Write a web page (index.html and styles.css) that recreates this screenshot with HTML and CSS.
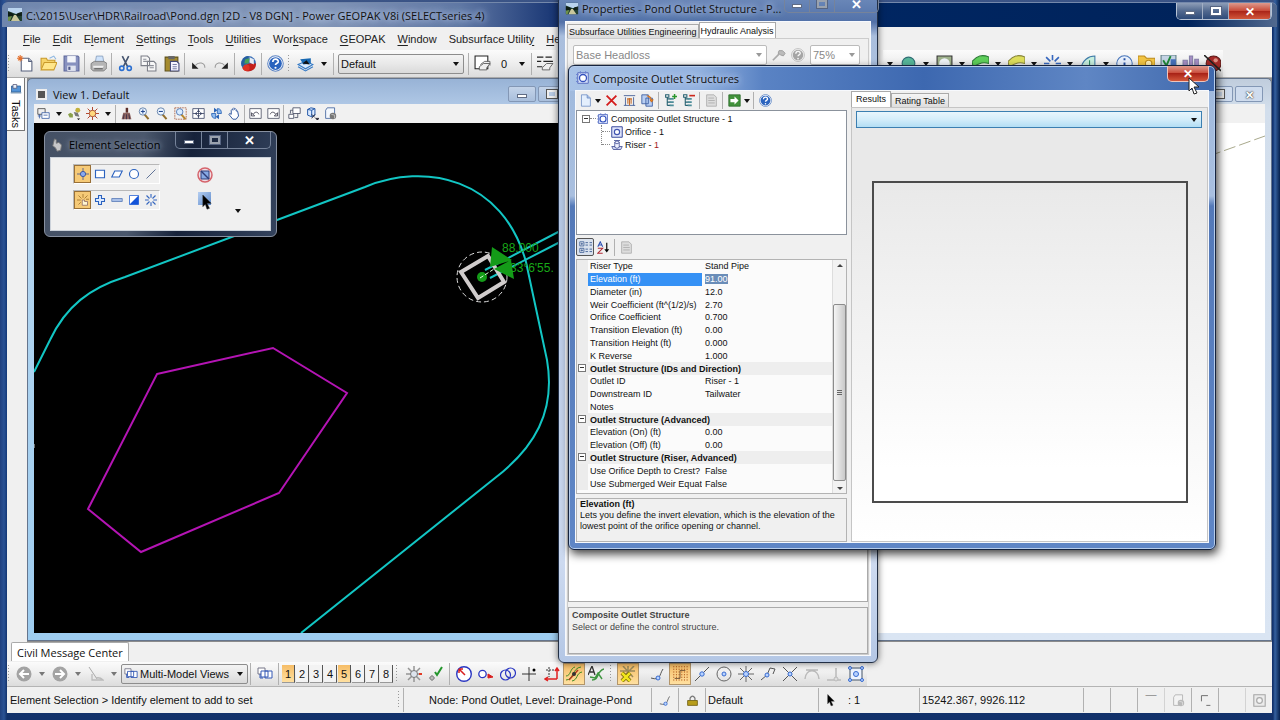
FILE: index.html
```html
<!DOCTYPE html>
<html lang="en">
<head>
<meta charset="utf-8">
<title>Power GEOPAK V8i</title>
<link rel="stylesheet" href="styles.css">
</head>
<body>
<svg class="defs" aria-hidden="true">
  <symbol id="photo" viewBox="0 0 16 16"><path d="M1 1h14v13H1z" fill="#1c3b2c"/><path d="M1 1h14v4L9 7 1 4z" fill="#b9d3ee"/><path d="M1 5l4 1 3 3 3-3 4-1v4H1z" fill="#0d1c14"/><path d="M7 8h2l4 6H4z" fill="#c9c79c"/><path d="M1 10l4-1-2 5H1z" fill="#6d8f4a"/></symbol>
  <symbol id="new" viewBox="0 0 16 16"><path d="M4 3h7l3 3v9H4z" fill="#fff" stroke="#56607c"/><path d="M11 3v3h3" fill="#ccd6e8" stroke="#56607c"/><path d="M3 0v6M0 3h6M1 1l4 4M5 1L1 5" stroke="#e4702c"/></symbol>
  <symbol id="open" viewBox="0 0 16 16"><path d="M1 13V3h5l1 2h7v3" fill="#f6d46a" stroke="#c99a2b"/><path d="M1 14l3-7h12l-3 7z" fill="#ffe68a" stroke="#c99a2b"/><path d="M9 3l4-2 2 3" fill="none" stroke="#8ab5e0"/></symbol>
  <symbol id="save" viewBox="0 0 16 16"><path d="M1 1h13l1 1v13H1z" fill="#8791bf" stroke="#5c6699"/><path d="M4 1h8v6H4z" fill="#f4f6fb"/><path d="M4 10h8v5H4z" fill="#dfe3ef"/><path d="M5 11h2v3H5z" fill="#4d5789"/></symbol>
  <symbol id="print" viewBox="0 0 16 16"><path d="M5 7L6 1h6l1 6z" fill="#cfe3fb" stroke="#7d94b3" stroke-width=".7"/><path d="M1 8l3-2h9l3 2v4l-3 3H3l-2-2z" fill="#b5b5b5" stroke="#777" stroke-width=".8"/><path d="M3 10h10l-1 2H3z" fill="#eee"/><path d="M4 13h8" stroke="#555"/></symbol>
  <symbol id="cut" viewBox="0 0 16 16"><path d="M5 1l5 10M11 1L6 11" stroke="#44536e" stroke-width="1.5"/><circle cx="4.500" cy="12.500" r="2" fill="none" stroke="#2b6fd0" stroke-width="1.500"/><circle cx="11.500" cy="12.500" r="2" fill="none" stroke="#2b6fd0" stroke-width="1.500"/></symbol>
  <symbol id="copy" viewBox="0 0 16 16"><path d="M1 1h6l2 2v7H1zM7 6h6l2 2v7H7z" fill="#f7f7f7" stroke="#7c7f88"/><path d="M3 4h3M3 6h4M9 10h4M9 12h4" stroke="#8c8f98"/></symbol>
  <symbol id="paste" viewBox="0 0 16 16"><path d="M2 2h12v13H2z" fill="#a58b2e" stroke="#5e5019"/><path d="M5 1h6v3H5z" fill="#666"/><path d="M7 6h6l2 2v7H7z" fill="#f5f5ff" stroke="#444a7a"/><path d="M9 9h4M9 11h4M9 13h4" stroke="#7a80a8"/></symbol>
  <symbol id="undo" viewBox="0 0 16 16"><path d="M2 7v6h6z" fill="#222"/><path d="M5 10c3-4 9-3 9 2" fill="none" stroke="#999"/></symbol>
  <symbol id="redo" viewBox="0 0 16 16"><path d="M14 7v6H8z" fill="#222"/><path d="M11 10C8 6 2 7 2 12" fill="none" stroke="#999"/></symbol>
  <symbol id="ball" viewBox="0 0 16 16"><circle cx="8" cy="8" r="7" fill="#3c70b8"/><path d="M8 8h7a7 7 0 0 1-13 4z" fill="#c5201c"/><path d="M8 1a7 7 0 0 0-6 10l5-3z" fill="#275f9f"/><path d="M9 2l4 2v5l-4-2z" fill="#e7edf5"/><path d="M5 4l4-1-1 5H4z" fill="#49a157"/><circle cx="6" cy="12" r="3" fill="#df3323"/></symbol>
  <symbol id="help" viewBox="0 0 16 16"><circle cx="8" cy="8" r="7.300" fill="#fff" stroke="#5d84c3"/><circle cx="8" cy="8" r="6" fill="#2a63be"/><path d="M5.500 6.500c0-4 5.500-3 5 0-.4 1.500-2.500 1.300-2.500 3" fill="none" stroke="#fff" stroke-width="1.600"/><circle cx="8" cy="12" r="1" fill="#fff"/></symbol>
  <symbol id="model" viewBox="0 0 16 16"><path d="M1 9l7-3 7 3-7 4z" fill="#d8eafc" stroke="#3479c5"/><path d="M1 11l7 4 7-4" fill="none" stroke="#3479c5"/><path d="M3 4l10-1v5l-7 1z" fill="#1768b2"/><path d="M5 8l4-3 3 4z" fill="#111"/></symbol>
  <symbol id="layer" viewBox="0 0 16 16"><path d="M1 1h12v12H1z" fill="#fff" stroke="#222"/><path d="M5 11l4-3h6l-3 4v2H5zM6 9l4-3h5v4" fill="#eee" stroke="#555" stroke-width=".8"/></symbol>
  <symbol id="linestyle" viewBox="0 0 16 16"><path d="M0 2h6M8 2h6M0 6h4M6 6h9M0 11h5" stroke="#222"/><path d="M5 12l4-4h6l-3 4v2H5z" fill="#eee" stroke="#555" stroke-width=".8"/></symbol>
  <symbol id="views" viewBox="0 0 16 16"><path d="M1 2h9v7H1z" fill="#eee" stroke="#444"/><path d="M6 7h9v7H6z" fill="#fff" stroke="#3a5fa5"/><path d="M1 11h4M3 9v5M8 10h5" stroke="#3a5fa5"/></symbol>
  <symbol id="attributes" viewBox="0 0 16 16"><path d="M0 9l3-2 3 2v4H2z" fill="#8aa04a"/><circle cx="12" cy="4" r="3" fill="#c2b13c"/><path d="M7 6l5 1 2 5-5-1z" fill="#777"/><path d="M11 14h4l-2 2z"/></symbol>
  <symbol id="sun" viewBox="0 0 16 16"><path d="M8 0v16M0 8h16M2 2l12 12M14 2L2 14" stroke="#b2452d" stroke-width="1.2"/><circle cx="8" cy="8" r="4" fill="#ffd97d" stroke="#9c3a28"/></symbol>
  <symbol id="brush" viewBox="0 0 16 16"><path d="M7 1h3v6H7z" fill="#5c2f2a"/><path d="M4 7h8l2 8H2z" fill="#8d6460"/><path d="M5 9l-1 6M8 9v6M11 9l1 6" stroke="#372c48"/></symbol>
  <symbol id="zoomin" viewBox="0 0 16 16"><path d="M8 9l5 6" stroke="#93702e" stroke-width="2.500"/><circle cx="6" cy="5.500" r="4.500" fill="#eaf4ff" stroke="#51719d"/><path d="M3.500 5.500h5M6 3v5" stroke="#264b93" stroke-width="1.300"/></symbol>
  <symbol id="zoomout" viewBox="0 0 16 16"><path d="M8 9l5 6" stroke="#93702e" stroke-width="2.500"/><circle cx="6" cy="5.500" r="4.500" fill="#eaf4ff" stroke="#51719d"/><path d="M3.500 5.500h5" stroke="#264b93" stroke-width="1.300"/></symbol>
  <symbol id="zoomarea" viewBox="0 0 16 16"><path d="M1 1h14v14H1z" fill="none" stroke="#a65a3c" stroke-dasharray="2 1"/><path d="M9 9l5 6" stroke="#b9892e" stroke-width="2.500"/><circle cx="7" cy="6" r="4" fill="#d9ecff" stroke="#3d69ac"/></symbol>
  <symbol id="fit" viewBox="0 0 16 16"><path d="M1 2h14v12H1zM8 2v12M1 8h14" fill="#fff" stroke="#3c4666"/><path d="M3 8l3-2v4zM13 8l-3-2v4zM8 3L6 6h4zM8 13l-2-3h4z" fill="#3c4666"/></symbol>
  <symbol id="rotate" viewBox="0 0 16 16"><path d="M2 8h5v6C3 14 2 12 2 8zM9 2c4 0 5 2 5 6H9z" fill="#8fbcf0" stroke="#245fb3"/><path d="M5 1l4 3-4 3zM11 9l-4 3 4 3z" fill="#245fb3"/></symbol>
  <symbol id="hand" viewBox="0 0 16 16"><path d="M4 9V4q1-2 2 0V2q1-2 2 0v1q1-2 2 0v2q2-1 2 1l1 5-3 4H6L1 9q1-2 3 0z" fill="#fff" stroke="#32599e" stroke-width="1.200"/></symbol>
  <symbol id="prev" viewBox="0 0 16 16"><path d="M1 2h14v12H1z" fill="#fff" stroke="#4b5062"/><path d="M3 7v4h4zM5 9c3-4 6-3 7 0" fill="none" stroke="#334"/></symbol>
  <symbol id="next" viewBox="0 0 16 16"><path d="M1 2h14v12H1z" fill="#fff" stroke="#4b5062"/><path d="M13 7v4H9zM11 9C8 5 5 6 4 9" fill="none" stroke="#334"/></symbol>
  <symbol id="viewcopy" viewBox="0 0 16 16"><path d="M6 1h9v7H6zM1 9h6v5H1z" fill="#fff" stroke="#444a60"/><path d="M3 4h3M3 4v4M12 8v5H8" fill="none" stroke="#444a60"/></symbol>
  <symbol id="cube" viewBox="0 0 16 16"><path d="M2 3l4-2 5 1v8l-4 2-5-2zM2 3l5 1v8M7 4l4-2" fill="#dcebff" stroke="#2457a7" stroke-width="1.200"/><path d="M7 9l4 4M11 9l-4 5M12 14h4l-2 2z" stroke="#223"/></symbol>
  <symbol id="clip" viewBox="0 0 16 16"><path d="M9 14H2V4l2-3h9v7" fill="#f4f8fd" stroke="#3c5f9b"/><circle cx="11" cy="11" r="4" fill="#777"/><path d="M9 9l4 1v4" stroke="#ccc" fill="none"/></symbol>
  <symbol id="tasks" viewBox="0 0 16 16"><path d="M2 4h12v8H2z" fill="#5394d8" stroke="#28588d"/><path d="M4 2h5v5H4z" fill="#e8f1fb" stroke="#557"/><path d="M1 12h14v2H1z" fill="#7f9cba"/></symbol>
  <symbol id="target" viewBox="0 0 16 16"><path d="M8 0v16M0 8h16" stroke="#364a8e"/><circle cx="8" cy="8" r="3.500" fill="#88a9ee" stroke="#24439b"/></symbol>
  <symbol id="rect" viewBox="0 0 16 16"><path d="M2 3h12v10H2z" fill="#fff" stroke="#2b62bf" stroke-width="1.500"/></symbol>
  <symbol id="skew" viewBox="0 0 16 16"><path d="M5 4h10l-4 8H1z" fill="#fff" stroke="#2b62bf" stroke-width="1.500"/></symbol>
  <symbol id="circle" viewBox="0 0 16 16"><circle cx="8" cy="8" r="6" fill="#fff" stroke="#2b62bf" stroke-width="1.500"/></symbol>
  <symbol id="line" viewBox="0 0 16 16"><path d="M2 14L14 2" stroke="#5c6f94" stroke-width="1.300"/></symbol>
  <symbol id="pick" viewBox="0 0 16 16"><path d="M8 0v5M0 8h5M2 2l4 4M14 2l-4 4M2 14l3-3M12 7h4" stroke="#956a24"/><path d="M7 15V8h3v2h4v5z" fill="#fff6d2" stroke="#866"/></symbol>
  <symbol id="plus" viewBox="0 0 16 16"><path d="M6 2h4v4h4v4h-4v4H6v-4H2V6h4z" fill="#dceaff" stroke="#2b62bf" stroke-width="1.400"/></symbol>
  <symbol id="minus" viewBox="0 0 16 16"><path d="M1 6h14v4H1z" fill="#a9c0e8" stroke="#5375b4"/></symbol>
  <symbol id="invert" viewBox="0 0 16 16"><path d="M2 2h12v12H2z" fill="#fff" stroke="#1c5bd2"/><path d="M14 2v12H2z" fill="#1454d9"/></symbol>
  <symbol id="burst" viewBox="0 0 16 16"><path d="M8 0v5M8 11v5M0 8h5M11 8h5M2 2l4 4M10 10l4 4M14 2l-4 4M6 10l-4 4" stroke="#3667bf" stroke-width="1.500"/></symbol>
  <symbol id="deny" viewBox="0 0 16 16"><circle cx="8" cy="8" r="7" fill="#f1dfe6" stroke="#d5646c" stroke-width="1.500"/><path d="M4 4h8v8H4z" fill="#86a9e4" stroke="#303d78"/><path d="M4 4l8 8" stroke="#303d78" stroke-width="1.500"/></symbol>
  <symbol id="cursor" viewBox="0 0 12 18"><path d="M1 0v14l3-3 2 6 3-1-3-6h5z" fill="#000" stroke="#333" stroke-width=".6"/></symbol>
  <symbol id="wrench" viewBox="0 0 16 16"><path d="M4 1l2 1v4l3-1 3 3-1 6-4 1-2-4-3-2z" fill="#c5c6c9" stroke="#777"/></symbol>
  <symbol id="tool" viewBox="0 0 16 16"><path d="M1 14l7-7" stroke="#aaa" stroke-width="2"/><path d="M8 3h4l3 3-2 3-3-1-3-2z" fill="#bbb" stroke="#999"/></symbol>
  <symbol id="composite" viewBox="0 0 16 16"><path d="M2 2h12v12H2z" fill="#d8e2fc" stroke="#4a60b8"/><circle cx="8" cy="8" r="4" fill="#fff" stroke="#3451bd" stroke-width="1.500"/><path d="M0 4h3M0 8h2M0 12h3M5 0v3M11 0v3" stroke="#6a80d0"/></symbol>
  <symbol id="orifice" viewBox="0 0 16 16"><path d="M1 1h14v14H1z" fill="#dfe4fb" stroke="#38479b" stroke-width="1.300"/><circle cx="8" cy="8" r="3.500" fill="#fff" stroke="#4053b0" stroke-width="1.500"/></symbol>
  <symbol id="riser" viewBox="0 0 16 16"><path d="M1 10h14l-2 4H3z" fill="#d4daf5" stroke="#34408b"/><path d="M5 11V4q3-3 6 0v7q-3 3-6 0z" fill="#f1f3ff" stroke="#34408b"/><path d="M5 5q3 3 6 0M4 2h8" fill="none" stroke="#34408b"/></symbol>
  <symbol id="doc" viewBox="0 0 16 16"><path d="M3 1h7l4 4v10H3z" fill="#e4effd" stroke="#6f8fc5"/><path d="M10 1v4h4" fill="#a3bce3" stroke="#6f8fc5"/></symbol>
  <symbol id="delete" viewBox="0 0 16 16"><path d="M2 2l12 12M14 2L2 14" stroke="#d41c1c" stroke-width="2.200"/></symbol>
  <symbol id="rename" viewBox="0 0 16 16"><path d="M1 2h14M3 4v10M13 4v10M1 14h14" stroke="#36538f"/><path d="M5 6h6M6 6v6M10 6v6M8 5v9" stroke="#c66d2b" stroke-width="1.300"/></symbol>
  <symbol id="report" viewBox="0 0 16 16"><path d="M1 1h8v11H1zM6 5h8v10H6z" fill="#b8cef2" stroke="#34569b"/><path d="M7 2l4 1 2 4M11 7h4l-2 3z" fill="#f28b24" stroke="#c86916"/></symbol>
  <symbol id="treeadd" viewBox="0 0 16 16"><path d="M2 1h4v3H2zM4 4v10M4 6h4M4 10h4M4 14h4" fill="none" stroke="#246070" stroke-width="1.300"/><path d="M7 5h5v2H7zM7 9h5v2H7zM7 13h5v2H7z" fill="#4e8d99"/><path d="M13 0v6M10 3h6" stroke="#29962d" stroke-width="1.800"/></symbol>
  <symbol id="treedel" viewBox="0 0 16 16"><path d="M2 1h4v3H2zM4 4v10M4 6h4M4 10h4M4 14h4" fill="none" stroke="#246070" stroke-width="1.300"/><path d="M7 5h5v2H7zM7 9h5v2H7zM7 13h5v2H7z" fill="#4e8d99"/><path d="M9 2h7" stroke="#cd281d" stroke-width="2"/></symbol>
  <symbol id="page" viewBox="0 0 16 16"><path d="M2 1h9l3 3v11H2z" fill="#ddd" stroke="#aaa"/><path d="M4 5h7M4 8h8M4 11h8" stroke="#aaa"/></symbol>
  <symbol id="go" viewBox="0 0 16 16"><path d="M1 1h14v14H1z" fill="#42923b" stroke="#2b6b2b"/><path d="M3 6h5V3l5 5-5 5v-3H3z" fill="#fff"/></symbol>
  <symbol id="category" viewBox="0 0 16 16"><path d="M1 1h5v5H1zM1 9h5v5H1z" fill="#fff" stroke="#30528c"/><path d="M2 3.500h3M3.500 2v3M2 11.500h3M3.500 10v3M8 2h3M13 2h3M8 5h3M13 5h3M8 10h3M13 10h3M8 13h3M13 13h3" stroke="#30528c"/></symbol>
  <symbol id="sort" viewBox="0 0 16 16"><path d="M1 7l3-6 3 6M2 5h4" fill="none" stroke="#2b50b5" stroke-width="1.300"/><path d="M1 9h6l-6 6h6" fill="none" stroke="#b02a35" stroke-width="1.300"/><path d="M12 2v9" stroke="#111" stroke-width="1.500"/><path d="M9 10h6l-3 4z"/></symbol>
  <symbol id="back" viewBox="0 0 16 16"><circle cx="8" cy="8" r="7.500" fill="#a3a3a3"/><path d="M13 8H4M8 4L4 8l4 4" fill="none" stroke="#fff" stroke-width="2"/></symbol>
  <symbol id="forward" viewBox="0 0 16 16"><circle cx="8" cy="8" r="7.500" fill="#a3a3a3"/><path d="M3 8h9M8 4l4 4-4 4" fill="none" stroke="#fff" stroke-width="2"/></symbol>
  <symbol id="flag" viewBox="0 0 16 16"><path d="M1 1l8 12" stroke="#aaa"/><path d="M4 8v6h11q-3-3-7-2" fill="none" stroke="#bbb" stroke-width="1.300"/></symbol>
  <symbol id="multi" viewBox="0 0 16 16"><path d="M1 2h7v6H1z" fill="#fff" stroke="#778"/><path d="M4 5h7v6H4zM8 5h7v7H8z" fill="#fff" stroke="#3559b5"/><path d="M3 8v4h3" fill="none" stroke="#3559b5"/></symbol>
  <symbol id="gear" viewBox="0 0 16 16"><path d="M8 0v16M0 8h16M2 2l12 12M14 2L2 14" stroke="#959595" stroke-width="1.500"/><circle cx="8" cy="8" r="3.500" fill="#dde4ed" stroke="#777"/><path d="M13 7h3v2h-3z" fill="#e23a25"/></symbol>
  <symbol id="check" viewBox="0 0 16 16"><path d="M1 12h6M4 9v6" stroke="#888"/><circle cx="4" cy="12" r="2" fill="#bbb" stroke="#888"/><path d="M7 6l2 3 5-8" fill="none" stroke="#24962d" stroke-width="2"/></symbol>
  <symbol id="c1" viewBox="0 0 16 16"><circle cx="8" cy="8" r="7.300" fill="#fff" stroke="#2a36c2" stroke-width="1.400"/><path d="M9 9L3 3M3 3v4M3 3h4" stroke="#d92020" stroke-width="1.500"/></symbol>
  <symbol id="c2" viewBox="0 0 16 16"><circle cx="4.500" cy="8" r="3.700" fill="#fff" stroke="#2a36c2" stroke-width="1.300"/><path d="M15 11l-5-3v4z" stroke="#d92020" fill="#d92020"/></symbol>
  <symbol id="c3" viewBox="0 0 16 16"><circle cx="5.500" cy="9" r="5" fill="none" stroke="#2a36c2" stroke-width="1.200"/><circle cx="10.500" cy="7" r="5" fill="none" stroke="#2a36c2" stroke-width="1.200"/></symbol>
  <symbol id="c4" viewBox="0 0 16 16"><path d="M7 1v14M0 8h14" stroke="#333"/><circle cx="12" cy="4" r="1.500"/></symbol>
  <symbol id="c5" viewBox="0 0 16 16"><path d="M2 4h9M5 1v10" stroke="#333" stroke-dasharray="2 1"/><path d="M13 13V3M2 13h11M11 5l2-3 2 3M4 11l-3 2 3 2" fill="none" stroke="#e02020" stroke-width="1.500"/></symbol>
  <symbol id="c6" viewBox="0 0 16 16"><path d="M0 14c8 0 6-12 15-13M0 10c5 0 4-8 9-9M6 15c6-1 4-8 10-9" fill="none" stroke="#3f8c24"/><path d="M3 14l9-10" stroke="#b33b20" stroke-width="1.500"/><circle cx="8" cy="8" r="2" fill="#333"/></symbol>
  <symbol id="c7" viewBox="0 0 16 16"><path d="M0 9L4 0l3 9M2 6h4" fill="none" stroke="#333" stroke-width="1.300"/><path d="M4 14c8 0 4-9 12-11M2 11l5 1 3-5 4 6" fill="none" stroke="#3f9640" stroke-width="1.400"/></symbol>
  <symbol id="s0" viewBox="0 0 16 16"><path d="M3 0l10 11M14 0L5 9M8 0v11M0 5h15" stroke="#9b8a5b" stroke-width="1.500"/><path d="M2 7l8 8M10 7l-8 8" stroke="#6a5f00" stroke-width="4"/><path d="M2 7l8 8M10 7l-8 8" stroke="#f1e51c" stroke-width="2.500"/></symbol>
  <symbol id="s1" viewBox="0 0 16 16"><path d="M1 12c10 3 8-3 12-9" fill="none" stroke="#555"/><circle cx="8" cy="12" r="2" fill="#b8d3ff" stroke="#386bd0"/></symbol>
  <symbol id="dots" viewBox="0 0 18 18"><path d="M2 0v18M5 0v18M8 0v18M11 0v18M14 0v18M17 0v18" stroke="#b25b1d" stroke-dasharray="1.500 1.500"/><path d="M3 14h6V5h6" fill="none" stroke="#6c5033"/></symbol>
  <symbol id="s3" viewBox="0 0 16 16"><path d="M1 15L15 1" stroke="#555"/><circle cx="8" cy="8" r="2.200" fill="#b8d3ff" stroke="#386bd0"/></symbol>
  <symbol id="s4" viewBox="0 0 16 16"><circle cx="8" cy="8" r="7" fill="none" stroke="#666"/><circle cx="8" cy="8" r="2" fill="#b8d3ff" stroke="#386bd0"/></symbol>
  <symbol id="s5" viewBox="0 0 16 16"><path d="M8 0v16M0 8h16M2 2l12 12M14 2L2 14" stroke="#666"/><circle cx="8" cy="8" r="2.500" fill="#b8d3ff" stroke="#386bd0"/></symbol>
  <symbol id="s6" viewBox="0 0 16 16"><path d="M1 14l6-5 3-7 5 1-2 5" fill="none" stroke="#555"/><circle cx="7" cy="9" r="2" fill="#b8d3ff" stroke="#386bd0"/></symbol>
  <symbol id="s7" viewBox="0 0 16 16"><path d="M1 1l14 14M15 1L1 15" stroke="#555"/><circle cx="8" cy="8" r="2" fill="#b8d3ff" stroke="#386bd0"/></symbol>
  <symbol id="s8" viewBox="0 0 16 16"><path d="M1 13c1-11 13-11 14 0M2 4h12" fill="none" stroke="#bbb" stroke-width="1.500"/></symbol>
  <symbol id="s9" viewBox="0 0 16 16"><path d="M1 14h14M10 2v12" stroke="#bbb" stroke-width="1.500"/><circle cx="10" cy="13" r="2" fill="#ddd" stroke="#bbb"/></symbol>
  <symbol id="s10" viewBox="0 0 16 16"><path d="M2 2h12v12H2z" fill="#eef4ff" stroke="#456"/><g fill="#b8d3ff" stroke="#386bd0"><circle cx="2" cy="2" r="1.500"/><circle cx="14" cy="2" r="1.500"/><circle cx="2" cy="14" r="1.500"/><circle cx="14" cy="14" r="1.500"/><circle cx="8" cy="8" r="2.500"/></g></symbol>
  <symbol id="lock" viewBox="0 0 16 16"><path d="M5 8V5q3-5 6 0v3" fill="none" stroke="#777" stroke-width="1.500"/><path d="M2 8h12v6H2z" fill="#b79d1b" stroke="#6e5e10"/></symbol>
  <symbol id="globe" viewBox="0 0 16 16"><circle cx="8" cy="8" r="6" fill="#58b79b" stroke="#2e6d74"/></symbol>
  <symbol id="aerial" viewBox="0 0 16 16"><path d="M1 1h14v14H1z" fill="#9fb28c" stroke="#333"/><circle cx="8" cy="8" r="5" fill="#eef3f7"/></symbol>
  <symbol id="sheetg" viewBox="0 0 16 16"><path d="M0 6c5-5 9-7 16-4v6c-6-2-9 0-15 3z" fill="#5fcf5b" stroke="#2d7a37"/></symbol>
  <symbol id="sheety" viewBox="0 0 16 16"><path d="M0 6c5-5 9-7 16-4v6c-6-2-9 0-15 3z" fill="#dede5c" stroke="#86843a"/></symbol>
  <symbol id="sail" viewBox="0 0 16 16"><path d="M1 13C2 5 8 1 14 1v12z" fill="#c8efdf" stroke="#3f7aa8"/><path d="M9 5v8" stroke="#2d8a63"/></symbol>
  <symbol id="info" viewBox="0 0 16 16"><circle cx="8" cy="8" r="7.300" fill="#e8f0fc" stroke="#4674b9"/><path d="M8 3v2M8 7v6" stroke="#2752a6" stroke-width="1.800"/></symbol>
  <symbol id="folders" viewBox="0 0 16 16"><path d="M0 1h6l2 2h8v12H0z" fill="#f2c544" stroke="#bd8a1b"/><circle cx="10" cy="8" r="3" fill="#fff1b8" stroke="#bd8a1b"/></symbol>
  <symbol id="chart" viewBox="0 0 16 16"><path d="M1 0h14v14H1z" fill="#c4d3e4" stroke="#5d7c82"/><path d="M3 5l3 5 4-9" fill="none" stroke="#208838" stroke-width="1.800"/><path d="M10 4h5v8h-5z" fill="#4772bc"/></symbol>
  <symbol id="bars" viewBox="0 0 16 16"><path d="M1 5h4v10H1zM7 1h3v14H7zM12 4h4v11h-4z" fill="#a58fc5" stroke="#8580a8"/></symbol>
  <symbol id="stop" viewBox="0 0 16 16"><circle cx="9" cy="8" r="7" fill="#a62a28" stroke="#5b1a17"/><path d="M0 0l16 15" stroke="#222" stroke-width="1.500"/><circle cx="11" cy="5" r="2" fill="#dd8f83"/></symbol>
</svg>

<div class="desktop">
  <div class="app">
    <header class="app-title">
      <svg class="i16"><use href="#photo"/></svg>
      <h1 class="glow">C:\2015\User\HDR\Railroad\Pond.dgn [2D - V8 DGN] - Power GEOPAK V8i (SELECTseries 4)</h1>
      <div class="caption"><button aria-label="Minimize"><i class="min"></i></button><button aria-label="Restore"><i class="max"></i></button><button class="close" aria-label="Close">✕</button></div>
    </header>
    <nav class="menu">
      <a href="#"><u>F</u>ile</a><a href="#"><u>E</u>dit</a><a href="#">E<u>l</u>ement</a><a href="#"><u>S</u>ettings</a><a href="#"><u>T</u>ools</a><a href="#"><u>U</u>tilities</a><a href="#">Wor<u>k</u>space</a><a href="#"><u>G</u>EOPAK</a><a href="#"><u>W</u>indow</a><a href="#">Subsurface Utilit<u>y</u></a><a href="#"><u>H</u>elp</a>
    </nav>
    <div class="toolrow">
      <div class="toolbar main-tools">
        <i class="grip"></i>
        <button aria-label="New"><svg><use href="#new"/></svg></button><button aria-label="Open"><svg><use href="#open"/></svg></button><button aria-label="Save"><svg><use href="#save"/></svg></button><i class="sep"></i>
        <button aria-label="Print"><svg><use href="#print"/></svg></button><i class="sep"></i>
        <button aria-label="Cut"><svg><use href="#cut"/></svg></button><button aria-label="Copy"><svg><use href="#copy"/></svg></button><button aria-label="Paste"><svg><use href="#paste"/></svg></button><i class="sep"></i>
        <button aria-label="Undo"><svg><use href="#undo"/></svg></button><button aria-label="Redo"><svg><use href="#redo"/></svg></button><i class="sep"></i>
        <button aria-label="Bentley"><svg><use href="#ball"/></svg></button><i class="sep"></i>
        <button aria-label="Help"><svg><use href="#help"/></svg></button><i class="grip"></i>
        <button aria-label="Models"><svg><use href="#model"/></svg></button><button class="drop" aria-label="More models"></button><i class="sep"></i>
        <label class="combo level"><select aria-label="Active level"><option>Default</option></select></label><i class="sep"></i>
        <button aria-label="Level"><svg><use href="#layer"/></svg></button><span class="zero">0</span><button class="drop" aria-label="Color"></button><i class="sep"></i>
        <button aria-label="Line style"><svg><use href="#linestyle"/></svg></button>
      </div>
      <div class="toolbar survey-tools">
        <button class="drop" aria-label="Options"></button><button aria-label="Globe"><svg><use href="#globe"/></svg></button><button class="drop" aria-label="Options"></button><button aria-label="Aerial"><svg><use href="#aerial"/></svg></button><button class="drop" aria-label="Options"></button><button aria-label="Surface"><svg><use href="#sheetg"/></svg></button><button class="drop" aria-label="Options"></button><button aria-label="Terrain"><svg><use href="#sheety"/></svg></button><button class="drop" aria-label="Options"></button><button aria-label="Points"><svg><use href="#burst"/></svg></button><button class="drop" aria-label="Options"></button><button aria-label="Profile"><svg><use href="#sail"/></svg></button><button class="drop" aria-label="Options"></button><button aria-label="Info"><svg><use href="#info"/></svg></button><button aria-label="Folders"><svg><use href="#folders"/></svg></button><button aria-label="Chart"><svg><use href="#chart"/></svg></button><button aria-label="Bars"><svg><use href="#bars"/></svg></button><button aria-label="Stop"><svg><use href="#stop"/></svg></button>
      </div>
    </div>
    <div class="middle">
      <aside class="tasks"><button><svg><use href="#tasks"/></svg><span>Tasks</span></button></aside>
      <main class="views">
        <section class="view view-1">
          <header><i class="viewicon"></i><h2>View 1. Default</h2><div class="mdi"><button aria-label="Minimize"><i class="min"></i></button><button aria-label="Maximize"><i class="max"></i></button></div></header>
          <div class="toolbar view-tools">
            <button aria-label="Views"><svg><use href="#views"/></svg></button><button class="drop" aria-label="View list"></button><button aria-label="Attributes"><svg><use href="#attributes"/></svg></button><button aria-label="Brightness"><svg><use href="#sun"/></svg></button><button class="drop" aria-label="Brightness options"></button><i class="sep"></i><button aria-label="Update"><svg><use href="#brush"/></svg></button><button aria-label="Zoom in"><svg><use href="#zoomin"/></svg></button><button aria-label="Zoom out"><svg><use href="#zoomout"/></svg></button><button aria-label="Window area"><svg><use href="#zoomarea"/></svg></button><button aria-label="Fit view"><svg><use href="#fit"/></svg></button><button aria-label="Rotate"><svg><use href="#rotate"/></svg></button><button aria-label="Pan"><svg><use href="#hand"/></svg></button><i class="sep"></i><button aria-label="Previous"><svg><use href="#prev"/></svg></button><button aria-label="Next"><svg><use href="#next"/></svg></button><i class="sep"></i><button aria-label="Copy view"><svg><use href="#viewcopy"/></svg></button><button aria-label="Cube"><svg><use href="#cube"/></svg></button><button aria-label="Clip"><svg><use href="#clip"/></svg></button>
          </div>
          <svg class="drawing" role="img" aria-label="Pond drawing">
            <g transform="translate(-34 -123)" fill="none">
              <path d="M34 372L50 340C66 306 90 288 125 277L365 187C425 162 503 178 526 262L547 360C556 412 534 448 495 478L301 633" stroke="#12c6c4" stroke-width="2"/>
              <path d="M157 374L273 348L347 393L279 493L141 552L88 509z" stroke="#b414b4" stroke-width="2"/>
              <path d="M485 270L562 230M490 278L562 241" stroke="#18c4c4" stroke-width="2"/>
              <path d="M461 272L488 256L504 282L478 298z" stroke="#d0cccc" stroke-width="4"/>
              <circle cx="482" cy="277" r="25" stroke="#ddd" stroke-dasharray="5 3"/>
              <path d="M492 247L512 260L490 267zM494 269L511 260L514 279z" fill="#149b18"/>
              <circle cx="482" cy="277" r="5" fill="#149b18"/>
              <path d="M480 278l14-9" stroke="#d8ffd8" stroke-dasharray="4 2"/>
              <text x="502" y="252" class="dim">88.000</text><text x="510" y="272" class="dim">33°6'55.</text>
              <path d="M34 444v4" stroke="#ddd"/>
            </g>
          </svg>
        </section>
        <section class="view view-2">
          <header><div class="mdi"><button aria-label="Minimize"><i class="min"></i></button><button aria-label="Maximize"><i class="max"></i></button><button aria-label="Close">✕</button></div></header>
          <div class="toolbar view-tools"></div>
          <div class="paper"><svg width="56" height="22" aria-hidden="true"><path d="M0 21L56 1" stroke="#a9a98c" stroke-dasharray="12 4"/></svg></div>
        </section>
      </main>
    </div>
    <div class="message-tabs"><button>Civil Message Center</button></div>
    <div class="toolbar bottom-tools">
      <i class="grip"></i><button aria-label="Back"><svg><use href="#back"/></svg></button><button class="drop gray" aria-label="Back list"></button><button aria-label="Forward"><svg><use href="#forward"/></svg></button><button class="drop gray" aria-label="Forward list"></button><button aria-label="Flag"><svg><use href="#flag"/></svg></button><button class="drop gray" aria-label="Flag list"></button>
      <label class="combo models"><svg><use href="#multi"/></svg><select aria-label="View group"><option>Multi-Model Views</option></select></label><i class="sep"></i>
      <button aria-label="Manage views"><svg><use href="#multi"/></svg></button><i class="sep"></i>
      <div class="numbers"><button class="on">1</button><button>2</button><button>3</button><button>4</button><button class="on">5</button><button>6</button><button>7</button><button>8</button></div>
      <i class="grip"></i><button aria-label="Settings"><svg><use href="#gear"/></svg></button><button aria-label="Accept"><svg><use href="#check"/></svg></button><i class="sep"></i>
      <button aria-label="Radius"><svg><use href="#c1"/></svg></button><button aria-label="Offset"><svg><use href="#c2"/></svg></button><button aria-label="Circles"><svg><use href="#c3"/></svg></button><button aria-label="Cross"><svg><use href="#c4"/></svg></button><button aria-label="Axis"><svg><use href="#c5"/></svg></button><button class="on" aria-label="Rule"><svg><use href="#c6"/></svg></button><button aria-label="Annotate"><svg><use href="#c7"/></svg></button><i class="grip"></i>
      <button class="on" aria-label="Snap off"><svg><use href="#s0"/></svg></button><i class="space"></i><button aria-label="Near"><svg><use href="#s1"/></svg></button><button class="on" aria-label="Keypoint"><svg><use href="#dots"/></svg></button><button aria-label="Midpoint"><svg><use href="#s3"/></svg></button><button aria-label="Center"><svg><use href="#s4"/></svg></button><button aria-label="Origin"><svg><use href="#s5"/></svg></button><button aria-label="Bisector"><svg><use href="#s6"/></svg></button><button aria-label="Intersection"><svg><use href="#s7"/></svg></button><button aria-label="Tangent"><svg><use href="#s8"/></svg></button><button aria-label="Perpendicular"><svg><use href="#s9"/></svg></button><button aria-label="Multi-snap"><svg><use href="#s10"/></svg></button><i class="rest"></i>
    </div>
    <footer class="status">
      <span class="prompt">Element Selection &gt; Identify element to add to set</span><i class="grip"></i>
      <span class="cell node">Node: Pond Outlet, Level: Drainage-Pond</span><span class="cell tiny"><svg><use href="#s1"/></svg></span><span class="cell tiny"><svg><use href="#lock"/></svg></span><span class="cell level-name">Default</span><span class="cell count"><svg><use href="#cursor"/></svg>: 1</span><span class="cell coords">15242.367, 9926.112</span>
      <span class="cell tiny"></span><span class="cell tiny"></span><span class="cell tiny mark">—</span><span class="cell tiny faded"><svg><use href="#clip"/></svg></span><span class="cell tiny"><svg viewBox="0 0 16 16"><path d="M3 9V2h8M9 14h5" fill="none" stroke="#555"/></svg></span><span class="cell tiny"></span><span class="cell tiny faded"><svg><use href="#orifice"/></svg></span>
    </footer>
  </div>

  <section class="window selection">
    <header><svg class="i14"><use href="#wrench"/></svg><h2>Element Selection</h2><div class="caption dark"><button aria-label="Minimize"><i class="min"></i></button><button aria-label="Maximize"><i class="max"></i></button><button class="x" aria-label="Close">✕</button></div></header>
    <div class="selection-body">
      <div class="modes">
        <div class="strip"><button class="on" aria-label="Individual"><svg><use href="#target"/></svg></button><button aria-label="Block"><svg><use href="#rect"/></svg></button><button aria-label="Shape"><svg><use href="#skew"/></svg></button><button aria-label="Circle"><svg><use href="#circle"/></svg></button><button aria-label="Line"><svg><use href="#line"/></svg></button></div>
        <div class="strip"><button class="on" aria-label="New"><svg><use href="#pick"/></svg></button><button aria-label="Add"><svg><use href="#plus"/></svg></button><button aria-label="Subtract"><svg><use href="#minus"/></svg></button><button aria-label="Invert"><svg><use href="#invert"/></svg></button><button aria-label="Select all"><svg><use href="#burst"/></svg></button></div>
      </div>
      <div class="extras"><button aria-label="Disable handles"><svg class="i16"><use href="#deny"/></svg></button><button class="bluebox" aria-label="Select"><svg><use href="#cursor"/></svg></button></div>
      <button class="drop more" aria-label="Show more"></button>
    </div>
  </section>

  <section class="window properties">
    <header><svg class="i14"><use href="#photo"/></svg><h2 class="glow">Properties - Pond Outlet Structure - P...</h2><div class="caption dark"><button aria-label="Minimize"><i class="min"></i></button><button aria-label="Maximize"><i class="max"></i></button><button class="x" aria-label="Close">✕</button></div></header>
    <div class="client">
      <div class="tabs"><button>Subsurface Utilities Engineering</button><button class="active">Hydraulic Analysis</button></div>
      <div class="tab-page">
        <div class="headloss"><label class="combo disabled"><select disabled aria-label="Calculation"><option>Base Headloss</option></select></label><svg class="i14"><use href="#tool"/></svg><svg class="i14 mono"><use href="#help"/></svg><label class="combo disabled percent"><select disabled aria-label="Zoom"><option>75%</option></select></label></div>
        <div class="blank"></div>
        <div class="hint"><b>Composite Outlet Structure</b><p>Select or define the control structure.</p></div>
      </div>
    </div>
  </section>

  <section class="window composite">
    <header><svg class="i14"><use href="#composite"/></svg><h2 class="glow">Composite Outlet Structures</h2><button class="close" aria-label="Close">✕</button></header>
    <div class="client">
      <div class="left-pane">
        <div class="toolbar dialog-tools"><button aria-label="New"><svg><use href="#doc"/></svg></button><button class="drop" aria-label="New options"></button><button aria-label="Delete"><svg><use href="#delete"/></svg></button><button aria-label="Rename"><svg><use href="#rename"/></svg></button><button aria-label="Duplicate"><svg><use href="#report"/></svg></button><i class="sep"></i><button aria-label="Expand"><svg><use href="#treeadd"/></svg></button><button aria-label="Collapse"><svg><use href="#treedel"/></svg></button><i class="sep"></i><button aria-label="Report"><svg><use href="#page"/></svg></button><i class="sep"></i><button aria-label="Go"><svg><use href="#go"/></svg></button><button class="drop" aria-label="Go options"></button><i class="sep"></i><button aria-label="Help"><svg><use href="#help"/></svg></button></div>
        <div class="tree">
          <div class="root"><i class="box"></i><i class="dash"></i><svg><use href="#composite"/></svg>Composite Outlet Structure - 1</div>
          <ul><li><i class="dash"></i><svg><use href="#orifice"/></svg>Orifice - 1</li><li><i class="dash"></i><svg><use href="#riser"/></svg>Riser -&nbsp;<span class="red">1</span></li></ul>
        </div>
        <div class="toolbar grid-tools"><button class="pressed" aria-label="Categorized"><svg><use href="#category"/></svg></button><button aria-label="Alphabetical"><svg><use href="#sort"/></svg></button><i class="sep"></i><button aria-label="Pages"><svg><use href="#page"/></svg></button></div>
        <div class="grid-box">
          <table>
            <tr><th>Riser Type</th><td>Stand Pipe</td></tr>
            <tr class="selected"><th>Elevation (ft)</th><td><span class="mark-text">91.00</span></td></tr>
            <tr><th>Diameter (in)</th><td>12.0</td></tr>
            <tr><th>Weir Coefficient (ft^(1/2)/s)</th><td>2.70</td></tr>
            <tr><th>Orifice Coefficient</th><td>0.700</td></tr>
            <tr><th>Transition Elevation (ft)</th><td>0.00</td></tr>
            <tr><th>Transition Height (ft)</th><td>0.000</td></tr>
            <tr><th>K Reverse</th><td>1.000</td></tr>
            <tr class="group"><th colspan="2"><i class="box"></i>Outlet Structure (IDs and Direction)</th></tr>
            <tr><th>Outlet ID</th><td>Riser - 1</td></tr>
            <tr><th>Downstream ID</th><td>Tailwater</td></tr>
            <tr><th>Notes</th><td></td></tr>
            <tr class="group"><th colspan="2"><i class="box"></i>Outlet Structure (Advanced)</th></tr>
            <tr><th>Elevation (On) (ft)</th><td>0.00</td></tr>
            <tr><th>Elevation (Off) (ft)</th><td>0.00</td></tr>
            <tr class="group"><th colspan="2"><i class="box"></i>Outlet Structure (Riser, Advanced)</th></tr>
            <tr><th>Use Orifice Depth to Crest?</th><td>False</td></tr>
            <tr><th>Use Submerged Weir Equati</th><td>False</td></tr>
          </table>
          <div class="scroll"><i class="up"></i><i class="thumb"></i><i class="down"></i></div>
        </div>
        <div class="description"><b>Elevation (ft)</b><p>Lets you define the invert elevation, which is the elevation of the lowest point of the orifice opening or channel.</p></div>
      </div>
      <div class="right-pane">
        <div class="tabs"><button class="active">Results</button><button>Rating Table</button></div>
        <div class="results"><label class="combo blue"><select aria-label="Result"><option></option></select></label><div class="plot"></div></div>
      </div>
    </div>
  </section>
  <svg class="pointer" viewBox="0 0 12 18" aria-hidden="true"><path d="M1 1v13l3-3 2 6 3-1-3-6h5z" fill="#fff" stroke="#222"/></svg>
</div>
</body>
</html>
```
FILE: styles.css
```css
* { box-sizing: border-box; }
body { margin: 0; font-family: "Liberation Sans", sans-serif; font-size: 11px; color: #111; }
button { border: 0; padding: 0; margin: 0; background: none; font: inherit; color: inherit; display: flex; align-items: center; justify-content: center; flex: none; }
select { font: inherit; color: inherit; appearance: none; border: 0; background: none; width: 100%; height: 100%; padding: 0 2px; opacity: 1; }
h1, h2, p, ul { margin: 0; padding: 0; font-size: inherit; font-weight: normal; }
svg { flex: none; }
.defs { position: absolute; width: 0; height: 0; }
.desktop { position: relative; height: 100vh; overflow: hidden; }
.i16 { width: 16px; height: 16px; }
.i14 { width: 14px; height: 14px; }

/* main frame */
.app { height: 100%; display: flex; flex-direction: column; padding: 2px 8px 7px 7px; background: linear-gradient(90deg, #20407e, #2a5294 4px, transparent 7px, transparent calc(100% - 7px), #35619f calc(100% - 5px), #07214d), linear-gradient(#3c5587, #10306c 27px, #143a7a 60%, #12316a); }
.app-title { height: 25px; flex: none; display: flex; align-items: center; gap: 3px; font: 11px "Open Sans", sans-serif; margin: 0 -5px; padding-left: 5px; background: linear-gradient(90deg, #6f86ad, #8195b7 25%, #5f77a4 36%, #133170 44%, #002764 60%, #00235b 93%, #51698f); border-top: 1px solid #7488ab; border-radius: 6px 6px 0 0; }
.glow { text-shadow: 0 0 6px #cfdcf4, 0 0 10px #b7caeb; white-space: nowrap; }
.caption { display: flex; margin-left: auto; align-self: flex-start; height: 17px; border: 1px solid #b7c3d5; border-top: 0; border-radius: 0 0 5px 5px; overflow: hidden; margin-right: 5px; flex: none; }
.caption button { width: 26px; border-right: 1px solid #a2afc4; background: linear-gradient(#8e9db7, #52698f 50%, #2e4b79); color: #fff; }
.caption .close, .composite .close { width: 42px; color: #fff; font-size: 12px; font-weight: bold; background: linear-gradient(#de9a8d, #c94b39 48%, #a92317 50%, #d2573b); }
.min { width: 10px; height: 4px; background: #fff; border: 1px solid #606c84; align-self: flex-end; margin-bottom: 4px; }
.max { width: 10px; height: 8px; border: 2px solid #fff; outline: 1px solid #566481; }
.menu { height: 23px; flex: none; display: flex; align-items: center; gap: 12px; padding-left: 16px; background: #f0f0f0; overflow: hidden; white-space: nowrap; }
.menu a { color: #222; text-decoration: none; }
.menu u { text-underline-offset: 2px; }

/* tool bars */
.toolrow { display: flex; justify-content: space-between; background: #efefef; flex: none; height: 28px; border-bottom: 1px solid #aaa; overflow: hidden; }
.toolbar { display: flex; align-items: center; background: linear-gradient(#fbfbfb, #efefef 45%, #dcdcdc); }
.toolbar button { width: 22px; height: 22px; }
.toolbar svg { width: 16px; height: 16px; }
.toolbar .drop { width: 14px; }
.drop::after { content: ""; border: 3px solid transparent; border-top: 4px solid #111; border-bottom: 0; }
.drop.gray::after { border-top-color: #777; }
.sep { width: 1px; height: 22px; background: #b0b0b0; margin: 0 1px; flex: none; }
.grip { width: 3px; height: 18px; flex: none; margin: 0 2px 0 1px; background: repeating-linear-gradient(#999 0 1px, transparent 1px 3px) 0 0 / 1px 100% no-repeat; }
.main-tools { gap: 1px; }
.main-tools svg { width: 17px; height: 17px; }
.survey-tools { margin-right: 49px; }
.survey-tools svg { width: 17px; height: 17px; }
.zero { width: 20px; text-align: center; }
.combo { position: relative; display: flex; align-items: center; border: 1px solid #8d8d8d; height: 20px; border-radius: 2px; background: linear-gradient(#f4f4f4, #e8e8e8 50%, #dadada); flex: none; }
.combo::after { content: ""; position: absolute; right: 4px; top: 7px; border: 3px solid transparent; border-top: 4px solid #111; border-bottom: 0; pointer-events: none; }
.level { width: 126px; margin: 0 2px; }

/* views */
.middle { flex: 1; min-height: 0; display: flex; background: #f0f0f0; }
.tasks { width: 20px; flex: none; background: #f0f0f0; }
.tasks button { flex-direction: column; gap: 5px; width: 18px; height: 53px; justify-content: flex-start; padding-top: 5px; background: #fff; border-right: 1px solid #777; border-bottom: 1px solid #777; }
.tasks svg { width: 12px; height: 12px; }
.tasks span { writing-mode: vertical-rl; }
.views { flex: 1; display: flex; min-width: 0; padding-bottom: 1px; background: #8b8b8b; }
.view { display: flex; flex-direction: column; border: 1px solid #65758d; border-radius: 5px 5px 0 0; }
.view-1 { width: 600px; flex: none; padding: 5px 6px 7px; background: linear-gradient(#98b3d6, #b3cbe8 30px, #b6d6f0 90px, #9ecdf0); }
.view-2 { flex: 1; min-width: 0; padding: 5px 6px 7px; background: linear-gradient(#c0cddd, #d2deec 30px, #dae5f3); }
.view header { height: 20px; display: flex; align-items: center; gap: 6px; font: 11px "Open Sans", sans-serif; }
.viewicon { width: 11px; height: 11px; background: #555; border: 2px solid #eee; margin-left: 2px; }
.mdi { margin-left: auto; display: flex; gap: 2px; padding-right: 2px; }
.view-1 .mdi { padding-right: 54px; }
.mdi button { width: 28px; height: 16px; border: 1px solid #8397b5; border-radius: 2px; background: linear-gradient(#c4d4e9, #a9bfdc); color: #fff; font-weight: bold; }
.view-2 .mdi button { background: #cfdcee; text-shadow: 0 0 2px #333, 0 0 1px #333; }
.mdi .min { margin: 0 0 3px; }
.mdi .max { outline-color: #555; border-color: #eee; }
.view-tools { height: 19px; flex: none; background: #f1f1f1; overflow: hidden; }
.view-tools button { width: 18px; height: 18px; }
.view-tools .drop { width: 13px; }
.view-tools svg { width: 13px; height: 13px; }
.view-tools .sep { height: 18px; }
.drawing { flex: 1; min-height: 0; width: 100%; background: #000; }
.dim { fill: #18a818; font: 12px "Liberation Sans", sans-serif; }
.paper { flex: 1; background: #fff; text-align: right; padding-top: 12px; overflow: hidden; }

/* bottom area */
.message-tabs { height: 20px; flex: none; background: #f0f0f0; padding-left: 4px; }
.message-tabs button { height: 19px; padding: 0 5px; background: #fff; border: 1px solid #aaa; border-bottom: 0; border-radius: 2px 2px 0 0; font: 11px "Open Sans", sans-serif; }
.bottom-tools { height: 25px; flex: none; border-bottom: 1px solid #b4b4b4; }
.bottom-tools .sep { margin: 0 3px 0 2px; }
.bottom-tools .grip:not(:first-child) { margin: 0 4px 0 3px; }
.rest { flex: 1; align-self: stretch; background: #f0f0f0; }
.models { width: 127px; }
.models svg { margin-left: 2px; width: 14px; height: 14px; }
.numbers { display: flex; gap: 1px; }
.numbers button { width: 13px; height: 18px; border-right: 1px solid #555; border-bottom: 1px solid #999; background: #f3f3f3; }
.numbers .on, .bottom-tools .on { background: linear-gradient(#f6bd67, #ffe0a0); }
.bottom-tools > .on { border: 1px solid #b2956a; }
.space { width: 8px; }
.status { height: 26px; flex: none; display: flex; align-items: center; background: #f0f0f0; padding: 1px 0; white-space: nowrap; }
.prompt { flex: 1; padding-left: 3px; overflow: hidden; }
.cell { height: 100%; display: flex; align-items: center; border-left: 1px solid #b1b1b1; padding-left: 2px; flex: none; overflow: hidden; }
.node { width: 248px; justify-content: center; padding-left: 6px; }
.tiny { width: 27px; justify-content: center; padding: 0; }
.tiny svg { width: 13px; height: 13px; }
.level-name { width: 113px; }
.count { width: 101px; padding-left: 8px; gap: 13px; }
.count svg { width: 8px; height: 13px; }
.coords { width: 164px; }
.mark { align-items: flex-start; color: #888; }
.faded { opacity: .45; filter: grayscale(1); }

/* floating windows */
.window { position: absolute; display: flex; flex-direction: column; border: 1px solid #222f45; border-radius: 6px; }
.window header { display: flex; align-items: center; flex: none; font: 11px "Open Sans", sans-serif; }
.window h2 { white-space: nowrap; }
.selection { left: 44px; top: 131px; width: 233px; height: 106px; padding: 0 5px 5px; background: linear-gradient(100deg, #445064, #4b586d 40%, #16223a 60%, #34435d); border-color: #8790a0; }
.selection header { height: 25px; gap: 4px; padding-left: 1px; color: #000; }
.selection h2 { text-shadow: 0 0 5px #9aa6ba, 0 0 9px #8793a8; }
.caption.dark button { background: transparent; border-color: #76839a; }
.caption.dark { border-color: #76839a; margin-right: 0; }
.dark .max { border-color: #9aa2ae; }
.caption .x { width: 42px; font-weight: bold; font-size: 13px; border: 0; }
.selection-body { flex: 1; background: #f0f0f0; border: 1px solid #ccd2da; display: flex; padding: 6px 0 0 22px; }
.modes { display: flex; flex-direction: column; gap: 6px; }
.strip { display: flex; border: 1px solid #b8b8b8; border-right-color: #fff; border-bottom-color: #fff; width: 87px; height: 20px; }
.strip button { width: 17px; height: 18px; }
.strip svg { width: 12px; height: 12px; }
.strip .on { background: #f6ca77; border: 1px solid #997037; }
.extras { display: flex; flex-direction: column; gap: 9px; padding: 3px 0 0 37px; }
.bluebox { width: 13px; height: 13px; margin-left: 1px; background: linear-gradient(135deg, #b5cef1, #5f8bcb); }
.bluebox svg { width: 10px; height: 15px; margin: 8px 0 0 4px; }
.more { align-self: center; margin: 28px 0 0 22px; }

.properties { left: 558px; top: -5px; width: 320px; height: 668px; padding: 0 6px 6px; background: linear-gradient(#6d8aba, #5271a8 26px, #a9bedd 40px, #cddaf0 85%, #b4c7e5); box-shadow: 0 0 7px rgba(0,0,0,.6); }
.properties header { height: 25px; gap: 3px; }
.properties .caption { margin-right: 4px; }
.properties .caption button { width: 25px; }
.properties .caption .x { width: 43px; }
.client { flex: 1; min-height: 0; background: #f0f0f0; border: 1px solid #f7f9fd; font: 9px/12px "Liberation Sans", sans-serif; }
.properties .client { display: flex; flex-direction: column; padding: 0 1px; }
.tabs { display: flex; align-items: flex-end; height: 16px; flex: none; }
.tabs button { height: 14px; padding: 0 3px; border: 1px solid #aaa; border-bottom: 0; background: linear-gradient(#f5f5f5, #ddd); white-space: nowrap; }
.tabs .active { height: 16px; background: #fff; padding: 0 4px 1px; }
.properties .tabs button { padding: 0 1px; }
.tab-page { flex: 1; min-height: 0; display: flex; flex-direction: column; border: 1px solid #ccc; padding: 6px 0 0; }
.headloss { display: flex; align-items: center; gap: 5px; padding: 0 6px 0 5px; font: 11px "Liberation Sans", sans-serif; }
.headloss .combo { width: 194px; color: #888; background: #fff; border-color: #bbb; }
.headloss .combo::after { border-top-color: #999; }
.headloss .percent { width: 50px; }
.mono { filter: grayscale(1); opacity: .5; }
.blank { flex: 1; margin: 4px 0 5px; background: #fff; border: 1px solid #aaa; }
.hint { height: 47px; border: 1px solid #aaa; padding: 1px 3px; color: #444; }

.composite { left: 568px; top: 65px; width: 648px; height: 485px; padding: 0 6px 6px; background: linear-gradient(90deg, #a9c3e7, #93b2df 20%, #5a83c4 30%, #3d68b0 55%, #5f86c4 80%, #3f68ac) 0 0 / 100% 25px no-repeat, linear-gradient(#9fb9dd, #a9bfdf 130px, #5479b8 140px, #5f86c6); border-color: #15233f; box-shadow: inset 0 0 0 1px #b5cceb, 2px 4px 10px rgba(0,0,0,.75); }
.composite header { height: 24px; gap: 3px; padding-left: 1px; }
.composite header .close { margin-left: auto; align-self: flex-start; height: 16px; border: 1px solid #efc5bc; border-top: 0; border-radius: 0 0 5px 5px; }
.composite .client { display: flex; }
.left-pane { width: 271px; flex: none; display: flex; flex-direction: column; }
.left-pane .toolbar { background: #f0f0f0; }
.dialog-tools { height: 19px; flex: none; }
.dialog-tools button, .grid-tools button { width: 18px; height: 18px; }
.dialog-tools svg, .grid-tools svg { width: 13px; height: 13px; }
.dialog-tools .drop { width: 8px; }
.dialog-tools .sep, .grid-tools .sep { height: 17px; margin: 0 2px; }
.tree { height: 125px; flex: none; background: #fff; border: 1px solid #8b929c; padding: 1px 0 0 5px; }
.root, .tree li { display: flex; align-items: center; height: 13px; white-space: nowrap; }
.tree ul { list-style: none; margin-left: 19px; border-left: 1px dotted #888; height: 20px; }
.tree svg { width: 12px; height: 12px; margin-right: 2px; }
.dash { width: 6px; border-top: 1px dotted #888; margin-right: 1px; }
.tree li .dash { width: 8px; }
.red { color: #a21c1c; }
.box { display: inline-block; width: 8px; height: 8px; border: 1px solid #777; background: linear-gradient(#333, #333) center / 4px 1px no-repeat #fff; flex: none; }
.grid-tools { height: 24px; flex: none; }
.pressed { border: 1px solid #555; border-radius: 2px; background: #d9e1ed; }
.grid-box { height: 235px; flex: none; display: flex; border: 1px solid #b3b3b3; background: #fbfbfb; margin-bottom: 4px; }
table { flex: 1; height: 230px; border-collapse: collapse; table-layout: fixed; width: 256px; }
th, td { padding: 0 0 0 3px; font-weight: normal; text-align: left; white-space: nowrap; overflow: hidden; }
th { width: 125px; padding-left: 13px; background: linear-gradient(90deg, #ececec 11px, transparent 11px); }
.group th { font-weight: bold; background: #eee; padding-left: 1px; }
.group .box { margin-right: 4px; }
.selected th { background: linear-gradient(90deg, #ececec 11px, #3591f5 11px); color: #fff; }
.mark-text { background: #6a8db8; color: #fff; }
.scroll { width: 14px; flex: none; background: #f2f2f2; display: flex; flex-direction: column; align-items: center; padding: 4px 0 3px; border-left: 1px solid #ddd; }
.up { border: 3px solid transparent; border-bottom-color: #444; border-top: 0; }
.down { border: 3px solid transparent; border-top-color: #444; border-bottom: 0; margin-top: 6px; }
.thumb { flex: 1; margin-top: 37px; width: 13px; border: 1px solid #8c8c8c; border-radius: 2px; background: repeating-linear-gradient(#666 0 1px, transparent 1px 2px) center / 5px 6px no-repeat, linear-gradient(90deg, #f5f5f5, #c9c9c9); }
.description { flex: 1; border: 1px solid #b3b3b3; padding: 0 3px; line-height: 11px; }
.right-pane { flex: 1; min-width: 0; display: flex; flex-direction: column; margin-left: 4px; }
.results { flex: 1; display: flex; flex-direction: column; border: 1px solid #c5c5c5; padding: 3px 5px 3px 4px; background: linear-gradient(#e9e9e9, #e9e9e9 20%, #fff); }
.results .blue { height: 17px; border-color: #3c7fb1; background: linear-gradient(#e9f6fd, #d4edfa 50%, #b3def4); border-radius: 0; }
.blue::after { top: 6px; }
.plot { flex: 1; margin: 53px 14px 35px 16px; border: 2px solid #4b4b4b; background: linear-gradient(#e9e9e9, #fff 90%); }
.pointer { position: absolute; left: 1188px; top: 77px; width: 12px; height: 18px; }
```
